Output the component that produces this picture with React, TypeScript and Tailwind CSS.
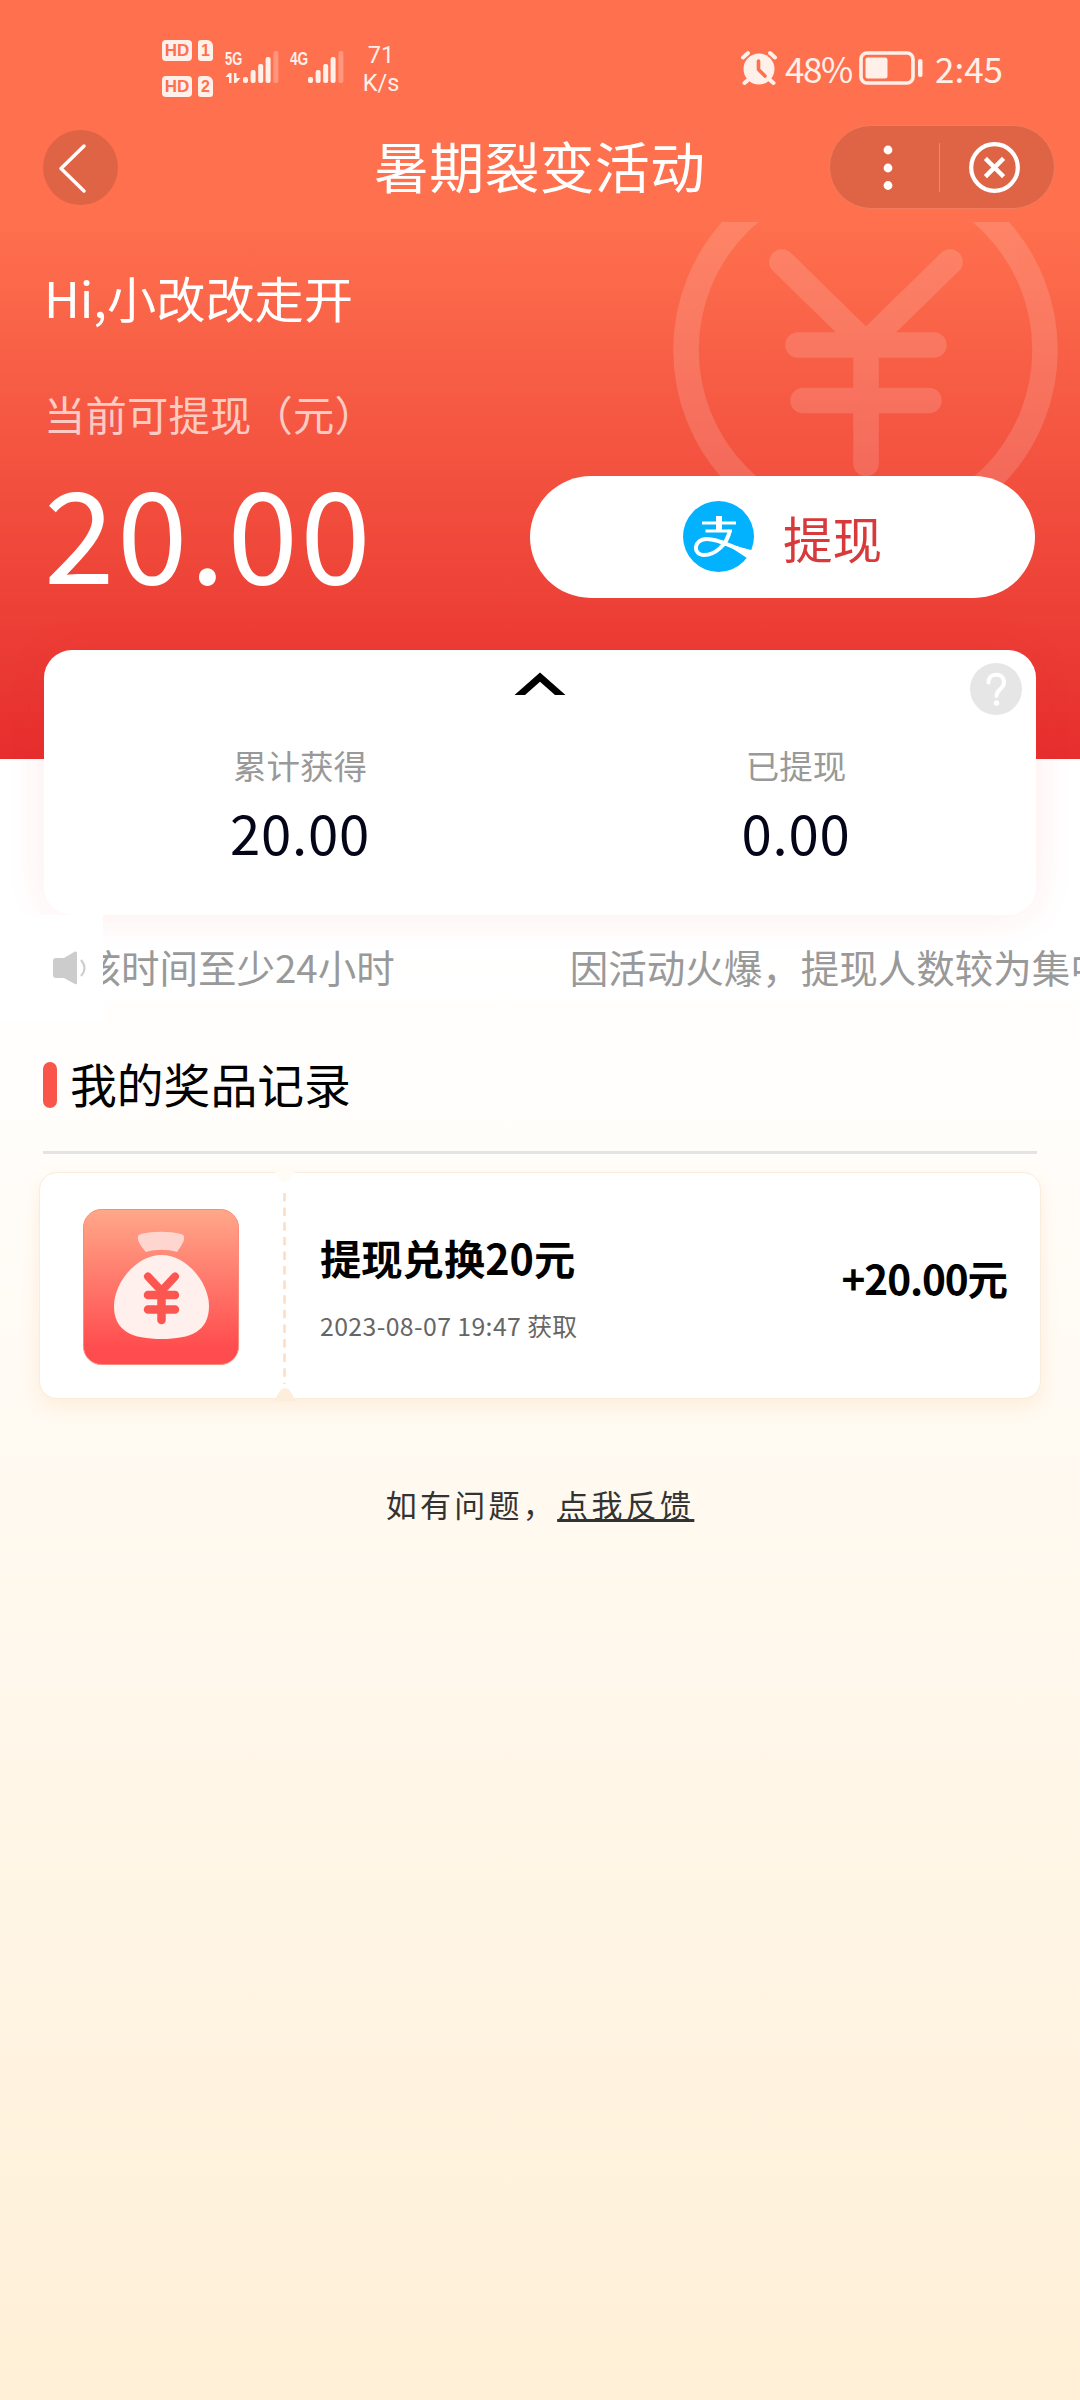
import React from 'react';

const SignalBars: React.FC = () => (
  <svg className="h-[34px] w-[36px]" viewBox="0 0 36 34" fill="#fff0ea" aria-hidden="true">
    <rect x="0" y="27" width="5" height="6" rx="2" />
    <rect x="7.6" y="20" width="5" height="13" rx="2" />
    <rect x="15.2" y="14" width="5" height="19" rx="2" />
    <rect x="22.6" y="7" width="5" height="26" rx="2" />
    <rect x="30.4" y="1" width="5" height="32" rx="2" opacity="0.3" />
  </svg>
);

const SimRow: React.FC<{ index: number }> = ({ index }) => (
  <div className="flex gap-[6px] font-['Liberation_Sans',sans-serif] font-bold leading-none text-[#fe704e]">
    <span className="flex h-[21px] w-[30px] items-center justify-center rounded-[4px] bg-[#fff0ea] text-[17px]">HD</span>
    <span className="flex h-[21px] w-[15px] items-center justify-center rounded-[3px] rounded-tr-[6px] bg-[#fff0ea] text-[16px]">{index}</span>
  </div>
);

const StatusBar: React.FC = () => (
  <div className="flex h-[120px] items-start justify-between pl-[162px] pr-[75px] text-[#fff0ea]">
    <div className="flex">
      <div className="flex flex-col gap-[15px] pt-[40px]">
        <SimRow index={1} />
        <SimRow index={2} />
      </div>
      <div className="ml-[12px] flex pt-[50px]">
        <div className="flex w-[18px] flex-col gap-[6px]">
          <span className="h-[16px] w-[26px] origin-left scale-x-[0.68] font-['Liberation_Sans',sans-serif] text-[19px] font-bold leading-[17px]">5G</span>
          <svg className="h-[12px] w-[16px]" viewBox="0 0 16 12" fill="#fff0ea" aria-hidden="true">
            <path d="M4 1 H6.5 V11 H4 V5 H0.5Z M9 1 H11.5 V6 H15.5 L11 11 H9Z" />
          </svg>
        </div>
        <SignalBars />
      </div>
      <div className="ml-[11px] flex pt-[50px]">
        <span className="h-[16px] w-[18px] origin-left scale-x-[0.72] font-['Liberation_Sans',sans-serif] text-[19px] font-bold leading-[17px]">4G</span>
        <SignalBars />
      </div>
      <div className="ml-[17px] mt-[41px] flex w-[40px] flex-col items-center font-['Roboto',sans-serif] text-[23.5px] leading-[28px]">
        <span>71</span>
        <span>K/s</span>
      </div>
    </div>

    <div className="mt-[50px] flex h-[36px] items-center text-[35px] leading-[36px]">
      <svg className="h-[36px] w-[38px]" viewBox="0 0 38 36" aria-hidden="true">
        <circle cx="19" cy="19" r="15.5" fill="#fff0ea" />
        <path d="M3 7.5 L8 3 M35 7.5 L30 3 M8 30 L4.5 33 M30 30 L33.5 33" stroke="#fff0ea" strokeWidth="4" strokeLinecap="round" />
        <path d="M18.5 11 V19.5 L25 26" stroke="#fe704e" strokeWidth="3.6" strokeLinecap="round" strokeLinejoin="round" fill="none" />
      </svg>
      <span className="ml-[7px] w-[68px] whitespace-nowrap tracking-[-1.4px]">48%</span>
      <svg className="ml-[6px] h-[34px] w-[64px]" viewBox="0 0 64 34" aria-hidden="true">
        <rect x="2" y="2" width="52" height="30" rx="6" fill="none" stroke="#fff0ea" strokeWidth="3.6" />
        <rect x="6.5" y="6.5" width="22" height="21" rx="2.5" fill="#fff0ea" />
        <rect x="59" y="8" width="4.5" height="18" rx="2" fill="#fff0ea" />
      </svg>
      <span className="ml-[12px] w-[70px] whitespace-nowrap">2:45</span>
    </div>
  </div>
);

const NavBar: React.FC = () => (
  <div className="mt-[5px] flex h-[84px] items-center pl-[43px] pr-[25px]">
    <button aria-label="返回" className="flex size-[75px] items-center justify-center rounded-full bg-[#df6345]">
      <svg className="size-[75px]" viewBox="0 0 75 75" fill="none" aria-hidden="true">
        <path d="M41 16 L18 38.5 L41 61" stroke="#fff" strokeWidth="3.5" strokeLinecap="round" strokeLinejoin="round" />
      </svg>
    </button>
    <h1 className="ml-[256px] pb-[5px] text-[55px] leading-[79px] tracking-[0.2px]">暑期裂变活动</h1>
    <div className="ml-auto flex h-[84px] w-[226px] items-center rounded-full border border-[#f17c5f] bg-[#df6345]">
      <svg className="size-full" viewBox="0 0 224 82" fill="none" aria-hidden="true">
        <g fill="#fff">
          <circle cx="58" cy="24" r="4.4" />
          <circle cx="58" cy="42" r="4.4" />
          <circle cx="58" cy="59.5" r="4.4" />
        </g>
        <path d="M109.5 17 V66" stroke="#f08669" strokeWidth="1" />
        <circle cx="164.5" cy="41.5" r="23.3" stroke="#fff" strokeWidth="4.2" />
        <path d="M157 34 L172 49 M172 34 L157 49" stroke="#fff" strokeWidth="4.5" strokeLinecap="square" />
      </svg>
    </div>
  </div>
);

// faded coin behind the balance
const CoinWatermark: React.FC = () => (
  <svg className="absolute left-[672px] top-[222px] h-[290px] w-[388px]" viewBox="672 222 388 290" fill="none" aria-hidden="true">
    <g stroke="#fff" strokeWidth="25.5" strokeLinecap="round" opacity="0.14">
      <circle cx="865.5" cy="350" r="179.5" />
      <path d="M782 262 L866 344 L950 262 M798 345 H934 M803 400.5 H929 M866 345 V463.5" />
    </g>
  </svg>
);

const AlipayLogo: React.FC = () => (
  <svg className="size-[71px]" viewBox="0 0 71 71" fill="none" aria-hidden="true">
    <circle cx="35.5" cy="35.5" r="35.5" fill="#02b2fe" />
    <path d="M19 22 H53 M22.5 30 H49" stroke="#fff" strokeWidth="3" />
    <path d="M36 15 V30" stroke="#fff" strokeWidth="6" />
    <path d="M47 29 C44 44 32 54 21 54 C9.500 54 10 38 24 38 C37 38 47 46 71 53" stroke="#fff" strokeWidth="4" />
    <path d="M41 42 L70 49.5 L64 57 Z" fill="#fff" />
  </svg>
);

const BalanceHeader: React.FC = () => (
  <header className="relative h-[759px] bg-[linear-gradient(180deg,#fe704e_0,#fe704e_222px,#e62e2e_759px)] text-white">
    <CoinWatermark />
    <div className="relative">
      <StatusBar />
      <NavBar />
      <div className="pl-[44px] pr-[45px]">
        <p className="mt-[53px] text-[49.2px] leading-[70px]">Hi,小改改走开</p>
        <p className="mt-[51px] text-[41.3px] leading-[60px] tracking-[0.2px] text-white/70">当前可提现（元）</p>
        <div className="mt-[33px] flex h-[121px] items-center justify-between">
          <span className="pb-[15px] text-[127px] leading-[106px] tracking-[2.4px]">20.00</span>
          <button className="flex h-[122px] w-[505px] items-center justify-center gap-[29px] rounded-full bg-white text-[49.6px] text-[#d83a3c]">
            <AlipayLogo />
            <span className="leading-[60px]">提现</span>
          </button>
        </div>
      </div>
    </div>
  </header>
);

const Stat: React.FC<{ label: string; value: string }> = ({ label, value }) => (
  <div className="flex flex-col items-center">
    <span className="text-[33.5px] leading-[40px] text-[#999]">{label}</span>
    <span className="mt-[12px] text-[54.5px] leading-[70px] tracking-[0.8px] text-[#05051a]">{value}</span>
  </div>
);

const SummaryCard: React.FC = () => (
  <section className="relative mx-[44px] -mt-[109px] h-[265px] rounded-[28px] bg-white shadow-[0_0_40px_rgba(255,40,40,0.09)]">
    <svg className="absolute left-[470px] top-[22px] h-[23px] w-[52px]" viewBox="0 0 52 23" aria-hidden="true">
      <path d="M0.5 23 L26 0.5 L51.5 23 H41 L26 9.7 L11 23Z" fill="#000" />
    </svg>
    <svg className="absolute right-[14px] top-[13px] size-[52px]" viewBox="0 0 52 52" fill="none" aria-hidden="true">
      <circle cx="26" cy="26" r="26" fill="#e6e6e6" />
      <path d="M18.5 19.5 C18.5 9 34 9 34 19.5 C34 26 26.500 26 26.500 33" stroke="#fff" strokeWidth="4" strokeLinecap="round" />
      <circle cx="26.5" cy="40" r="2.8" fill="#fff" />
    </svg>
    <div className="-mr-[8px] grid grid-cols-2 pl-[8px] pt-[95px]">
      <Stat label="累计获得" value="20.00" />
      <Stat label="已提现" value="0.00" />
    </div>
  </section>
);

const NoticeBar: React.FC = () => (
  <div className="relative flex h-[106px] overflow-hidden text-[38.5px] leading-[103px] text-[#999]">
    <div className="flex w-[103px] shrink-0 items-center bg-white pl-[53px]">
      <svg className="h-[34px] w-[34px]" viewBox="0 0 34 34" aria-hidden="true">
        <path d="M3 7 H11 L22 0.5 Q24 0 24 2 V32 Q24 34 22 33 L11 27 H3 Q0 27 0 24 V10 Q0 7 3 7Z" fill="#ccc" />
        <path d="M28 9 Q35 17 28 25" stroke="#ccc" strokeWidth="2" fill="none" />
      </svg>
    </div>
    <div className="flex flex-1 overflow-hidden whitespace-nowrap">
      <span className="-ml-[59px] shrink-0">审核时间至少24小时</span>
      <span className="ml-[175px] shrink-0">因活动火爆，提现人数较为集中，提现审核时间至少24小时</span>
    </div>
  </div>
);

const MoneyBag: React.FC = () => (
  <svg className="size-[156px]" viewBox="0 0 156 156" fill="none" aria-hidden="true">
    <defs>
      <linearGradient id="bagBg" x1="0" y1="0" x2="0" y2="1">
        <stop offset="0" stopColor="#ffa88a" />
        <stop offset="0.9" stopColor="#ff4c4e" />
      </linearGradient>
    </defs>
    <rect x="0.5" y="0.5" width="155" height="155" rx="18" fill="url(#bagBg)" stroke="#ff8a7c" />
    <path d="M63 43 C57 36 51 27 58 25 C70 22 86 22 98 25 C105 27 99 36 94 43 C84 40 73 40 63 43Z" fill="#ffd6cf" />
    <path d="M78.5 46 C104 46 126 74 126 97 C126 122 108 130 78.5 130 C49 130 31 122 31 97 C31 74 53 46 78.5 46Z" fill="#ffefed" />
    <g stroke="#fb5750" strokeLinecap="round" strokeLinejoin="round">
      <path d="M65 67.5 L78.5 82 L92 67.5" strokeWidth="8" />
      <path d="M65 86 H92 M65 100.5 H92 M78.5 84 V111" strokeWidth="8.5" />
    </g>
  </svg>
);

const PrizeTicket: React.FC = () => (
  <article className="relative mx-[39px] mt-[18px] flex h-[227px] rounded-[18px] border border-[#faecdc] bg-white shadow-[0_7px_20px_rgba(250,170,90,0.16)]">
    <div className="flex w-[245px] items-center pl-[43px] pt-[2px]">
      <MoneyBag />
    </div>
    <div className="flex flex-1 items-center justify-between pl-[35px] pr-[33px]">
      <div className="flex flex-col">
        <h3 className="text-[41.3px] font-bold leading-[56px] text-black">提现兑换20元</h3>
        <p className="mt-[22px] text-[24.8px] leading-[36px] tracking-[0.4px] text-[#666]">2023-08-07 19:47 获取</p>
      </div>
      <span className="pb-[15px] text-[40.5px] font-bold leading-[60px] tracking-[-1.1px] text-black">+20.00元</span>
    </div>
    {/* perforation with the two punched notches */}
    <svg className="absolute left-[230px] top-[-2px] h-[230px] w-[30px]" viewBox="0 0 30 230" fill="none" aria-hidden="true">
      <path d="M4 0 H26 C23 2 21 11 15 11 C9 11 7 2 4 0Z" fill="#fffcf6" />
      <path d="M4 230 H26 C23 227 21 217 15 217 C9 217 7 227 4 230Z" fill="#fdeedb" />
      <path d="M14.5 22 V213" stroke="#ffdcc0" strokeWidth="2.5" strokeDasharray="8.5 6.1" />
    </svg>
  </article>
);

export default function App() {
  return (
    <div className="h-[2400px] w-[1080px] overflow-hidden bg-[linear-gradient(180deg,#fff_0,#fff_960px,#fff0d7_2400px)] font-['Noto_Sans_CJK_SC',sans-serif]">
      <BalanceHeader />
      <SummaryCard />
      <NoticeBar />
      <main>
        <div className="mx-[43px] mt-[20px] flex h-[113px] items-center border-b-[3px] border-[#e5e4e3] pb-[22px]">
          <span className="h-[46px] w-[14px] rounded-full bg-[#f9554b]" />
          <h2 className="ml-[13px] pb-[5px] text-[46.8px] leading-[60px] text-black">我的奖品记录</h2>
        </div>
        <PrizeTicket />
        <p className="mt-[80px] text-center text-[31px] leading-[50px] tracking-[3.3px] text-[#333]">
          如有问题，<a className="underline decoration-[3px] underline-offset-[2px]">点我反馈</a>
        </p>
      </main>
    </div>
  );
}
